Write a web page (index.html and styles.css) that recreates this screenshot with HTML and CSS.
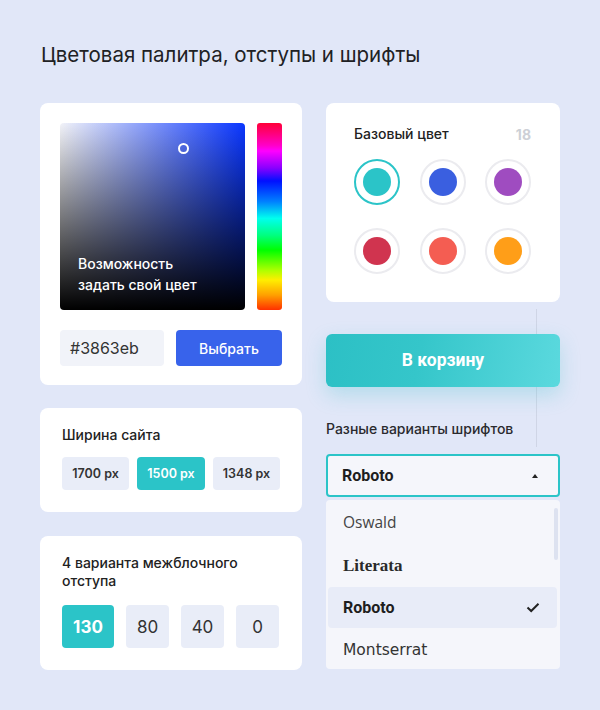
FILE: index.html
```html
<!DOCTYPE html>
<html lang="ru">
<head>
<meta charset="utf-8">
<link rel="stylesheet" href="styles.css">
</head>
<body>
<div class="page">
  <h1 class="title">Цветовая палитра, отступы и шрифты</h1>
  <div class="grid">
    <div class="col">
      <div class="card picker-card">
        <div class="picker">
          <div class="sv">
            <span class="marker"></span>
            <div class="sv-text">Возможность<br>задать свой цвет</div>
          </div>
          <div class="hue"></div>
        </div>
        <div class="picker-row">
          <div class="hex">#3863eb</div>
          <button class="pick-btn">Выбрать</button>
        </div>
      </div>
      <div class="card width-card">
        <div class="card-title">Ширина сайта</div>
        <div class="width-row">
          <div class="chip">1700 px</div>
          <div class="chip chip-active">1500 px</div>
          <div class="chip">1348 px</div>
        </div>
      </div>
      <div class="card gap-card">
        <div class="card-title gap-title">4 варианта межблочного<br>отступа</div>
        <div class="gap-row">
          <div class="gap-btn gap-active wide">130</div>
          <div class="gap-btn">80</div>
          <div class="gap-btn">40</div>
          <div class="gap-btn">0</div>
        </div>
      </div>
    </div>
    <div class="col right">
      <span class="vline"></span>
      <div class="card base-card">
        <div class="base-head">
          <span class="card-title">Базовый цвет</span>
          <span class="count">18</span>
        </div>
        <div class="swatches">
          <div class="sw sw-active"><span class="dot c1"></span></div>
          <div class="sw"><span class="dot c2"></span></div>
          <div class="sw"><span class="dot c3"></span></div>
          <div class="sw"><span class="dot c4"></span></div>
          <div class="sw"><span class="dot c5"></span></div>
          <div class="sw"><span class="dot c6"></span></div>
        </div>
      </div>
      <button class="cart-btn">В корзину</button>
      <div class="font-label">Разные варианты шрифтов</div>
      <div class="select">
        <span>Roboto</span>
        <span class="tri"></span>
      </div>
      <div class="dropdown">
        <span class="scroll"></span>
        <div class="opt f-oswald">Oswald</div>
        <div class="opt f-literata">Literata</div>
        <div class="opt f-roboto opt-active">Roboto
          <svg class="check" width="14" height="11" viewBox="0 0 14 11"><path d="M1.5 5.5 L5.2 9 L12.5 1.8" fill="none" stroke="#222" stroke-width="2"/></svg>
        </div>
        <div class="opt f-mont">Montserrat</div>
      </div>
    </div>
  </div>
</div>
</body>
</html>
```

FILE: styles.css
```css
* { box-sizing: border-box; }
html, body { margin: 0; padding: 0; }
body {
  background: #e1e7f8;
  font-family: Inter, "Noto Sans", sans-serif;
  color: #222;
  width: 600px;
  height: 710px;
  overflow: hidden;
}
.page { padding: 40px 40px 0 40px; }
.title {
  margin: 0 0 0 1px;
  font-size: 20.5px;
  font-weight: 400;
  line-height: 30px;
  color: #202124;
}
.grid {
  display: grid;
  grid-template-columns: 262px 234px;
  column-gap: 24px;
  margin-top: 33px;
}
.col { display: flex; flex-direction: column; }
.right { position: relative; }
.card { background: #fff; border-radius: 8px; }

/* picker */
.picker-card { padding: 20px 20px 19px; height: 282px; }
.picker { display: flex; gap: 12px; height: 187px; }
.sv {
  position: relative;
  width: 185px;
  height: 187px;
  border-radius: 4px;
  background:
    linear-gradient(to top, #000 0%, rgba(0,0,0,0) 100%),
    linear-gradient(to right, #f2f3f8 0%, #0a36ff 100%);
  display: flex;
  align-items: flex-end;
  padding: 0 18px 15px;
}
.marker {
  position: absolute;
  left: 118px;
  top: 20px;
  width: 11px;
  height: 11px;
  border: 2px solid #fff;
  border-radius: 50%;
}
.sv-text {
  color: #fff;
  font-size: 14px;
  font-weight: 500;
  line-height: 21px;
}
.hue {
  width: 25px;
  height: 187px;
  border-radius: 3px;
  background: linear-gradient(to bottom,
    #ff0038 0%, #ff00c8 12%, #ff00ff 15%, #8a00ff 24%, #0010ff 31%, #0080ff 42%,
    #00ffee 51%, #00ff80 60%, #00ff00 68%, #b0ff00 79%, #ffee00 84%, #ffa000 92%, #ff3000 100%);
}
.picker-row { display: flex; gap: 12px; margin-top: 20px; }
.hex {
  width: 104px;
  height: 36px;
  background: #f1f3f9;
  border-radius: 4px;
  font-size: 16px;
  color: #333;
  line-height: 36px;
  padding-left: 10px;
}
.pick-btn {
  width: 106px;
  height: 36px;
  border: 0;
  border-radius: 4px;
  background: #3863eb;
  color: #fff;
  font-family: Inter, sans-serif;
  font-size: 14px;
  font-weight: 500;
}

/* width */
.card-title { font-size: 14px; font-weight: 500; line-height: 20px; color: #222; }
.width-card { margin-top: 23px; height: 104px; padding: 17px 22px 0; }
.width-row { display: flex; gap: 8px; margin-top: 12px; }
.chip {
  width: 67px;
  height: 33px;
  border-radius: 4px;
  background: #e9edf8;
  font-size: 12.5px;
  font-weight: 600;
  color: #333;
  display: flex;
  align-items: center;
  justify-content: center;
}
.chip-active { width: 68px; background: #2bc4c8; color: #fff; }

/* gap */
.gap-card { margin-top: 24px; height: 134px; padding: 18px 22px 0; }
.gap-title { line-height: 18px; }
.gap-row { display: flex; gap: 12px; margin-top: 15px; }
.gap-btn {
  width: 43px;
  height: 43px;
  border-radius: 4px;
  background: #e9edf8;
  font-size: 17px;
  color: #333;
  display: flex;
  align-items: center;
  justify-content: center;
}
.gap-btn.wide { width: 52px; }
.gap-active { background: #2bc4c8; color: #fff; font-weight: 700; }

/* right column */
.vline {
  position: absolute;
  left: 210px;
  top: 206px;
  width: 1px;
  height: 138px;
  background: #cfd5e6;
}
.base-card { height: 199px; padding: 21px 29px 0 28px; position: relative; }
.base-head { display: flex; justify-content: space-between; align-items: center; }
.count { font-size: 14px; font-weight: 700; color: #cdd0d6; }
.swatches {
  display: grid;
  grid-template-columns: repeat(3, 46px);
  column-gap: 19.5px;
  row-gap: 23px;
  margin-top: 15px;
}
.sw {
  width: 46px;
  height: 46px;
  border-radius: 50%;
  border: 2px solid #ebebef;
  display: flex;
  align-items: center;
  justify-content: center;
}
.sw-active { border-color: #2bc4c8; }
.dot { width: 28px; height: 28px; border-radius: 50%; }
.c1 { background: #2bc4c8; }
.c2 { background: #3a5fe0; }
.c3 { background: #9f4cc0; }
.c4 { background: #d0344f; }
.c5 { background: #f45d52; }
.c6 { background: #ff9e18; }

.cart-btn {
  position: relative;
  margin-top: 32px;
  height: 53px;
  border: 0;
  border-radius: 6px;
  background: linear-gradient(100deg, #2cc0c5 0%, #35c6ca 40%, #5bd9de 100%);
  box-shadow: 0 8px 20px rgba(60, 190, 200, 0.28);
  color: #fff;
  font-family: Roboto, sans-serif;
  font-size: 17.5px;
  font-weight: 700;
  padding-bottom: 2px;
}
.font-label {
  margin-top: 33px;
  font-size: 14px;
  font-weight: 500;
  line-height: 18px;
  color: #2a2a2e;
}
.select {
  margin-top: 16px;
  height: 43px;
  border: 2px solid #2bc4c8;
  border-radius: 4px;
  background: #f5f6fb;
  display: flex;
  align-items: center;
  justify-content: space-between;
  padding: 0 20px 0 14px;
  font-family: Roboto, sans-serif;
  font-size: 16px;
  font-weight: 700;
  color: #1e1e1e;
}
.tri {
  width: 0; height: 0;
  border-left: 3.5px solid transparent;
  border-right: 3.5px solid transparent;
  border-bottom: 4px solid #222;
}
.dropdown {
  position: relative;
  margin-top: 3px;
  height: 169px;
  background: #f5f6fb;
  border-radius: 4px;
  padding: 0 3px 0 2px;
}
.scroll {
  position: absolute;
  right: 2px;
  top: 8px;
  width: 4px;
  height: 52px;
  border-radius: 2px;
  background: #dde2f0;
}
.opt {
  height: 43px;
  display: flex;
  align-items: center;
  justify-content: space-between;
  padding: 0 17px 0 15px;
  font-size: 16px;
  color: #333;
  border-radius: 4px;
}
.f-oswald { font-family: "Open Sans", sans-serif; color: #444; font-size: 15.5px; }
.f-literata { font-family: "Liberation Serif", serif; font-weight: 700; font-size: 17px; color: #2a2a2a; height: 44px; padding-top: 2px; }
.f-roboto { font-family: Roboto, sans-serif; font-weight: 700; color: #1e1e1e; height: 41px; }
.f-mont { font-family: "DejaVu Sans", sans-serif; font-size: 15.5px; color: #333; height: 41px; padding-top: 2px; }
.opt-active { background: #e8ecf8; }
.check { display: block; }
```
